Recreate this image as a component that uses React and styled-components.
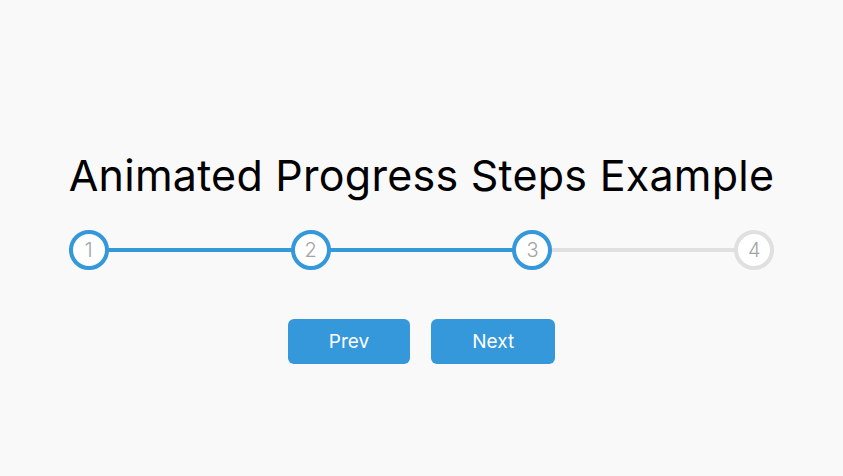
import React, { useState } from 'react';
import styled, { createGlobalStyle } from 'styled-components';

const GlobalStyle = createGlobalStyle`
  * {
    box-sizing: border-box;
  }
  body {
    margin: 0;
    background: #f9f9f9;
    font-family: Inter, "Noto Sans", sans-serif;
  }
`;

const steps = [1, 2, 3, 4];

export default function App() {
  const [current, setCurrent] = useState(3);
  const pct = ((current - 1) / (steps.length - 1)) * 100;

  return (
    <Page>
      <GlobalStyle />
      <Container>
        <Title>Animated Progress Steps Example</Title>
        <Progress>
          <Track />
          <Fill style={{ width: `${pct}%` }} />
          {steps.map(n => (
            <Circle key={n} active={n <= current}>
              {n}
            </Circle>
          ))}
        </Progress>
        <Buttons>
          <Button
            disabled={current === 1}
            onClick={() => setCurrent(c => Math.max(1, c - 1))}
          >
            Prev
          </Button>
          <Button
            disabled={current === steps.length}
            onClick={() => setCurrent(c => Math.min(steps.length, c + 1))}
          >
            Next
          </Button>
        </Buttons>
      </Container>
    </Page>
  );
}

const Page = styled.div`
  display: flex;
  align-items: center;
  justify-content: center;
  min-height: 100vh;
  padding-top: 37px;
`;

const Container = styled.div`
  display: flex;
  flex-direction: column;
  align-items: stretch;
`;

const Title = styled.h1`
  margin: 0 0 29px;
  font-size: 43px;
  line-height: 52px;
  letter-spacing: 0.25px;
  font-weight: 400;
  color: #000;
  text-align: center;
`;

const Progress = styled.div`
  position: relative;
  display: flex;
  justify-content: space-between;
  align-items: center;
  margin-bottom: 49px;
`;

const Track = styled.div`
  position: absolute;
  left: 0;
  right: 0;
  top: 50%;
  height: 4px;
  transform: translateY(-50%);
  background: #e0e0e0;
  z-index: 0;
`;

const Fill = styled.div`
  position: absolute;
  left: 0;
  top: 50%;
  height: 4px;
  transform: translateY(-50%);
  background: #3498db;
  transition: width 0.4s ease;
  z-index: 0;
`;

const Circle = styled.div`
  position: relative;
  z-index: 1;
  display: flex;
  align-items: center;
  justify-content: center;
  width: 40px;
  height: 40px;
  border-radius: 50%;
  background: #fff;
  border: 4px solid ${props => (props.active ? '#3498db' : '#e0e0e0')};
  color: #a3a3a3;
  font-size: 20px;
  font-weight: 300;
  transition: border-color 0.4s ease;
`;

const Buttons = styled.div`
  display: flex;
  justify-content: center;
  gap: 21px;
`;

const Button = styled.button`
  height: 45px;
  padding: 0 41px;
  border: 0;
  border-radius: 6px;
  background: #3498db;
  color: #fff;
  font-family: Inter, "Noto Sans", sans-serif;
  font-size: 19px;
  cursor: pointer;
  &:focus {
    outline: 0;
  }
`;
